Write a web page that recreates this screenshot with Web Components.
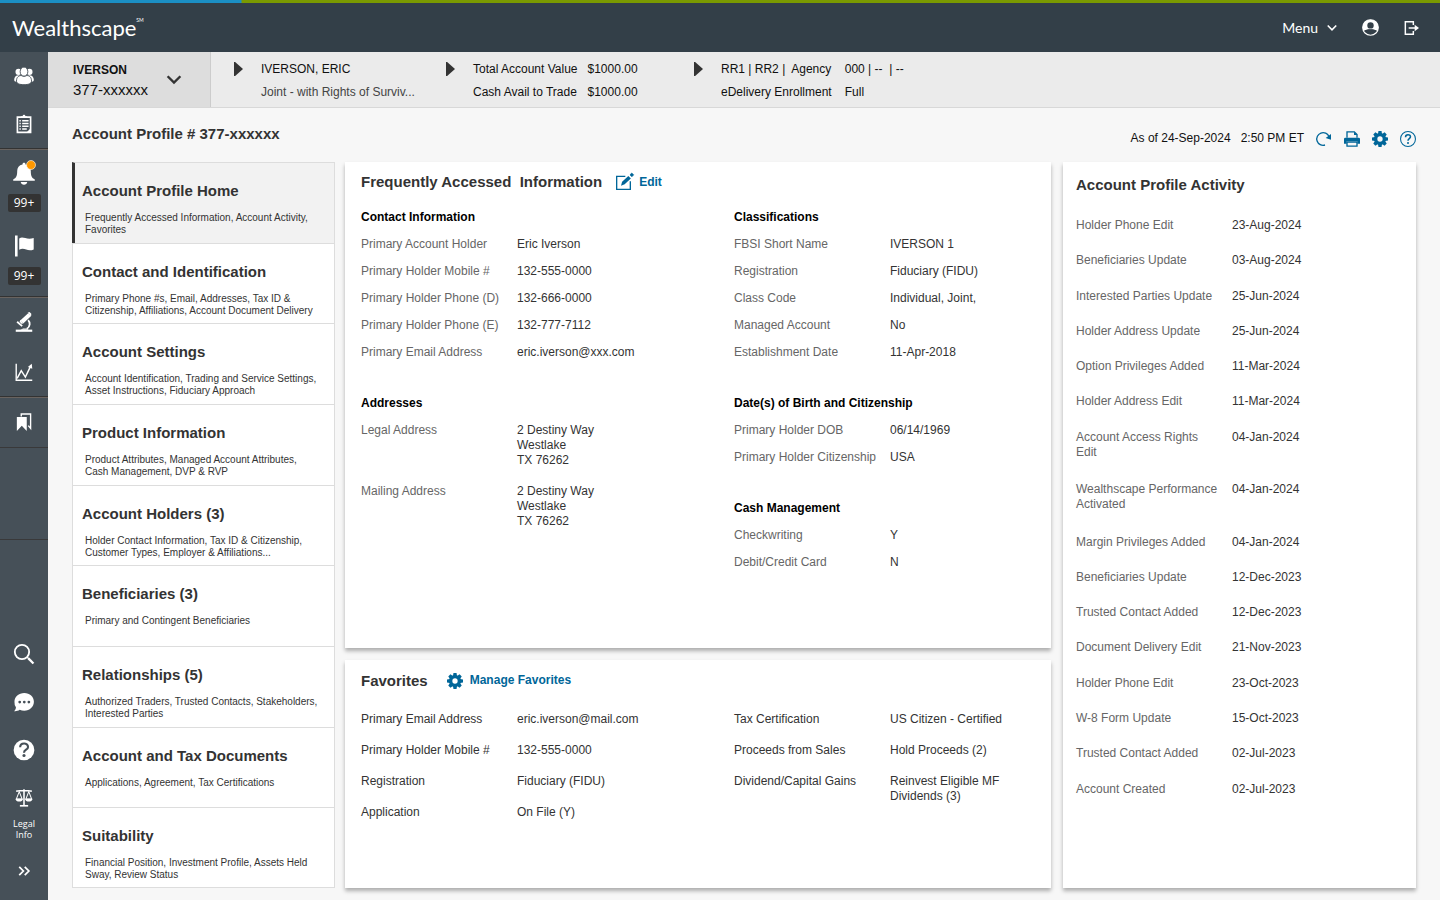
<!DOCTYPE html>
<html lang="en">
<head>
<meta charset="utf-8">
<meta name="viewport" content="width=device-width, initial-scale=1">
<title>Account Profile</title>
<style>
body {
  margin: 0;
  background: #f7f7f7;
  color: #333;
  font: 12px/15px "Liberation Sans", Arial, sans-serif;
}
</style>
</head>
<body>
<profile-app></profile-app>

<script>
const icons = {
  people: `<g fill="currentColor"><circle cx="6" cy="7.5" r="3.3"/><circle cx="18" cy="7.5" r="3.3"/><path d="M1.3 16.2c0-3 1.7-5 5-5l3 1v6H3.5c-1.5 0-2.2-.5-2.2-2zM22.7 16.2c0-3-1.7-5-5-5l-3 1v6h5.800c1.5 0 2.200-.5 2.200-2z"/></g><g fill="currentColor" stroke="#465058"><ellipse cx="12" cy="7.3" rx="4.2" ry="5"/><path d="M3.8 17.5c0-4.500 2.700-6 5.200-6 1.600 1.200 4.400 1.200 6 0 2.500 0 5.200 1.500 5.200 6 0 2.700-3.200 4-8.200 4s-8.200-1.300-8.200-4z"/></g>`,
  clipboard: `<path d="M4.800 4.500h14.400v16.700H4.800z" fill="none" stroke="currentColor" stroke-width="1.800"/><path d="M8.500 5V3.500h2a1.500 1.500 0 0 1 3 0h2V5z" fill="currentColor"/><path d="M7 8.500h1.500M10 8.500h7M7 11.500h1.500M10 11.500h7M7 14.500h1.500M10 14.500h7M7 17.500h1.500M10 17.500h5" stroke="currentColor" stroke-width="1.500"/><path d="M19 17v4h-4z" fill="currentColor"/>`,
  bell: `<path d="M12 1.800c1 0 1.500.7 1.500 1.600 3.500.7 5.300 3.300 5.300 6.600 0 5 1 7 4 8.400v1.300H1.200v-1.300c3-1.400 4-3.400 4-8.400 0-3.300 1.800-5.900 5.300-6.600 0-.9.5-1.600 1.500-1.600zM8.700 21h6.600c-.4 1.800-1.600 2.700-3.300 2.700S9.100 22.800 8.700 21z" fill="currentColor"/><circle cx="19" cy="4" r="4.500" fill="#ff9800" stroke="#fff" stroke-width=".6"/>`,
  flag: `<path d="M3 1.500h2.600v21H3zM7.200 4.500c4-3 7 2 14.500-.5v11.500c-6.500 2.800-9-2.700-14.500.3z" fill="currentColor"/>`,
  microscope: `<path d="M3 21.500h18" stroke="currentColor" stroke-width="2.400"/><path d="M8 20.500h9c-1-.8-1.500-1-2.600-1.300H11z" fill="currentColor"/><path d="M15 19.500c4-2.500 4-7 1.500-9.500" fill="none" stroke="currentColor" stroke-width="2"/><path d="M16.500 2.500l3.500 2.800-8.500 8L8.200 10z" fill="currentColor"/><path d="M16 2l2-1 2 2-.3 2.500zM8 9.500l3.500 4-2.300.3-2-2z" fill="currentColor"/><path d="M4.500 11.800l5.500 4.700" stroke="currentColor" stroke-width="2"/>`,
  chart: `<path d="M3.500 3v18H21" fill="none" stroke="currentColor" stroke-width="1.500"/><path d="M4.500 19L9 10.500l4.500 7L19.500 5" fill="none" stroke="currentColor" stroke-width="1.600"/><path d="M16.200 6.500L20.500 3l.5 5.500z" fill="currentColor"/>`,
  bookmarks: `<path d="M4.200 6.500H15v15.300l-5.400-5.600-5.400 5.600z" fill="currentColor"/><path d="M9 6V3.300h10.200V19l-2.500-3" fill="none" stroke="currentColor" stroke-width="1.500"/>`,
  search: `<circle cx="9.800" cy="9.800" r="7.800" fill="none" stroke="currentColor" stroke-width="2"/><path d="M15.500 15.500l1.700 1.700" stroke="currentColor" stroke-width="1.500"/><path d="M16.800 16.800l5.500 5.500" stroke="currentColor" stroke-width="2.500"/>`,
  chat: `<path d="M12.300 2.300c6 0 10.500 4.300 10.500 9.500s-4.500 9.800-10.500 9.800c-1.800 0-3.500-.4-5-1.100-1.800 1.300-3.800 1.700-6.100 1.500 1.400-1.200 2-2.500 2-4.200a9.300 9.300 0 0 1-1.600-6c0-5.200 4.700-9.500 10.700-9.500z" fill="currentColor"/><g fill="#465058"><circle cx="7.300" cy="12" r="1.500"/><circle cx="12.300" cy="12" r="1.500"/><circle cx="17.300" cy="12" r="1.500"/></g>`,
  helpSolid: `<circle cx="12" cy="12" r="11.300" fill="currentColor"/><path d="M7.800 9c0-5.500 8.600-5.400 8.600-.4 0 3.200-4.400 3-4.400 6.400" fill="none" stroke="#465058" stroke-width="2.300"/><circle cx="12" cy="18" r="1.700" fill="#465058"/>`,
  scales: `<path d="M3.500 4.500c3 0 5-.7 8.500-.7s5.500.7 8.500.7M12 2.500v17" fill="none" stroke="currentColor" stroke-width="1.700"/><path d="M7.500 20.500h9" stroke="currentColor" stroke-width="1.800"/><path d="M6.800 5L3.700 13h6.200zM17.200 5l-3.100 8h6.200z" fill="none" stroke="currentColor" stroke-width="1.100"/><path d="M2.800 12.700h8c0 4.300-8 4.300-8 0zM13.200 12.700h8c0 4.300-8 4.300-8 0z" fill="currentColor"/>`,
  expand: `<path d="M6.800 7.500l4.500 4.500-4.500 4.500M12.800 7.500l4.500 4.500-4.500 4.500" fill="none" stroke="currentColor" stroke-width="1.900"/>`,
  chevron: `<path d="M3.500 7l8.500 8.500L20.500 7" fill="none" stroke="currentColor" stroke-width="3.200"/>`,
  play: `<path d="M0 0h3l21 12L3 24H0z" fill="currentColor"/>`,
  user: `<circle cx="12" cy="12" r="11" fill="#333f48" stroke="currentColor" stroke-width="1.600"/><path d="M12 1a11 11 0 0 1 9.800 16c-2.300-1.800-5.800-2.500-9.800-2.500S4.500 15.200 2.200 17A11 11 0 0 1 12 1z" fill="currentColor"/><circle cx="12" cy="9" r="4.500" fill="#333f48"/><path d="M3.500 17.500c2-1.500 5-2.200 8.500-2.200s6.500.7 8.500 2.200" fill="none" stroke="#333f48"/>`,
  logout: `<path d="M15.500 7.500V2.500H3.500v19h12v-5" fill="none" stroke="currentColor" stroke-width="2.200"/><path d="M8.500 12h12" stroke="currentColor" stroke-width="2.200"/><path d="M17.500 7l6.500 5-6.500 5z" fill="currentColor"/>`,
  refresh: `<path d="M13.500 21a9.500 9.500 0 1 1 6-12.500" fill="none" stroke="currentColor" stroke-width="2"/><path d="M22.500 4.500v8.500l-8-2.500z" fill="currentColor"/>`,
  print: `<path d="M4.500 10V1.200h11l4 4V10" fill="none" stroke="currentColor" stroke-width="2"/><path d="M15 1v5h5z" fill="currentColor"/><path d="M2 10h20a2 2 0 0 1 2 2v7h-4v-4H4v4H0v-7a2 2 0 0 1 2-2z" fill="currentColor"/><path d="M4.500 16.500h15v6.300h-15z" fill="none" stroke="currentColor" stroke-width="2"/>`,
  gear: `<circle cx="12" cy="12" r="6.500" fill="none" stroke="currentColor" stroke-width="5"/><g fill="currentColor">${[0, 45, 90, 135, 180, 225, 270, 315].map(a => `<path d="M9.700 0h4.600l.7 4.500H9z" transform="rotate(${a} 12 12)"/>`).join("")}</g>`,
  help: `<circle cx="12" cy="12" r="11.200" fill="none" stroke="currentColor" stroke-width="1.600"/><path d="M8.300 9.200c0-4.800 7.400-4.700 7.400-.5 0 2.900-3.700 2.700-3.700 6" fill="none" stroke="currentColor" stroke-width="2.300"/><circle cx="12" cy="18" r="1.500" fill="currentColor"/>`,
  edit: `<path d="M14 3.500H1v19.500h20.500V11" fill="none" stroke="currentColor" stroke-width="2"/><path d="M7.500 17.500l1.700-6L18.500 3l3.800 3.800-9.300 8.700z" fill="currentColor"/><path d="M21 1.500L23.500-1.500 26.500 1.200 24 4z" fill="currentColor" stroke="currentColor"/>`
};

const navItems = [
  ["Account Profile Home", "Frequently Accessed Information, Account Activity, Favorites"],
  ["Contact and Identification", "Primary Phone #s, Email, Addresses, Tax ID &amp; Citizenship, Affiliations, Account Document Delivery"],
  ["Account Settings", "Account Identification, Trading and Service Settings, Asset Instructions, Fiduciary Approach"],
  ["Product Information", "Product Attributes, Managed Account Attributes, Cash Management, DVP &amp; RVP"],
  ["Account Holders (3)", "Holder Contact Information, Tax ID &amp; Citizenship, Customer Types, Employer &amp; Affiliations..."],
  ["Beneficiaries (3)", "Primary and Contingent Beneficiaries"],
  ["Relationships (5)", "Authorized Traders, Trusted Contacts, Stakeholders, Interested Parties"],
  ["Account and Tax Documents", "Applications, Agreement, Tax Certifications"],
  ["Suitability", "Financial Position, Investment Profile, Assets Held Sway, Review Status"]
];

const address = "2 Destiny Way<br>Westlake<br>TX 76262";

const facts = {
  contact: [
    ["Primary Account Holder", "Eric Iverson"],
    ["Primary Holder Mobile #", "132-555-0000"],
    ["Primary Holder Phone (D)", "132-666-0000"],
    ["Primary Holder Phone (E)", "132-777-7112"],
    ["Primary Email Address", "eric.iverson@xxx.com"]
  ],
  addresses: [
    ["Legal Address", address],
    ["Mailing Address", address]
  ],
  classifications: [
    ["FBSI Short Name", "IVERSON 1"],
    ["Registration", "Fiduciary (FIDU)"],
    ["Class Code", "Individual, Joint,"],
    ["Managed Account", "No"],
    ["Establishment Date", "11-Apr-2018"]
  ],
  birth: [
    ["Primary Holder DOB", "06/14/1969"],
    ["Primary Holder Citizenship", "USA"]
  ],
  cash: [
    ["Checkwriting", "Y"],
    ["Debit/Credit Card", "N"]
  ],
  favoritesLeft: [
    ["Primary Email Address", "eric.iverson@mail.com"],
    ["Primary Holder Mobile #", "132-555-0000"],
    ["Registration", "Fiduciary (FIDU)"],
    ["Application", "On File (Y)"]
  ],
  favoritesRight: [
    ["Tax Certification", "US Citizen - Certified"],
    ["Proceeds from Sales", "Hold Proceeds (2)"],
    ["Dividend/Capital Gains", "Reinvest Eligible MF Dividends (3)"]
  ],
  activity: [
    ["Holder Phone Edit", "23-Aug-2024"],
    ["Beneficiaries Update", "03-Aug-2024"],
    ["Interested Parties Update", "25-Jun-2024"],
    ["Holder Address Update", "25-Jun-2024"],
    ["Option Privileges Added", "11-Mar-2024"],
    ["Holder Address Edit", "11-Mar-2024"],
    ["Account Access Rights Edit", "04-Jan-2024", "tall"],
    ["Wealthscape Performance Activated", "04-Jan-2024", "tall"],
    ["Margin Privileges Added", "04-Jan-2024"],
    ["Beneficiaries Update", "12-Dec-2023"],
    ["Trusted Contact Added", "12-Dec-2023"],
    ["Document Delivery Edit", "21-Nov-2023"],
    ["Holder Phone Edit", "23-Oct-2023"],
    ["W-8 Form Update", "15-Oct-2023"],
    ["Trusted Contact Added", "02-Jul-2023"],
    ["Account Created", "02-Jul-2023"]
  ]
};

const base = `
*, *::before { box-sizing: border-box; }
button {
  display: flex;
  border: 0;
  padding: 0;
  background: none;
  color: inherit;
  font: inherit;
  cursor: pointer;
}
a { color: inherit; text-decoration: none; }
h1, h2, dl, dd, dt, p { margin: 0; }
`;

class BaseElement extends HTMLElement {
  constructor() {
    super();
    this.attachShadow({ mode: "open" });
  }
  connectedCallback() {
    this.shadowRoot.innerHTML = `<style>${base}${this.styles()}</style>${this.render()}`;
  }
}

class UiIcon extends BaseElement {
  styles() {
    const size = this.getAttribute("size") || 24;
    return `
:host { display: inline-flex; flex: none; }
svg { display: block; width: ${size}px; height: ${size}px; overflow: visible; }
:host([name="play"]) svg { width: 9px; height: 14px; }
`;
  }
  render() {
    const fit = this.getAttribute("name") === "play" ? "none" : "xMidYMid";
    return `<svg viewBox="0 0 24 24" preserveAspectRatio="${fit}" aria-hidden="true">${icons[this.getAttribute("name")]}</svg>`;
  }
}
customElements.define("ui-icon", UiIcon);

class AppHeader extends BaseElement {
  styles() {
    return `
:host { display: block; background: #333f48; color: #fff; }
.stripe {
  height: 3px;
  background: linear-gradient(90deg, #1b8fc4 241px, #7a9a01 242px);
}
.bar {
  display: flex;
  align-items: center;
  justify-content: space-between;
  height: 49px;
  padding: 0 21px 0 12px;
  font-family: Lato, sans-serif;
}
.logo { display: flex; font-size: 22px; line-height: 28px; }
.logo sup { font-size: 5px; line-height: 12px; }
.tools, .menu { display: flex; align-items: center; }
.tools { gap: 24px; }
.menu { gap: 8px; font-size: 14px; line-height: 20px; }
`;
  }
  render() {
    return `
<div class="stripe"></div>
<header class="bar">
  <a class="logo" href="#home">Wealthscape<sup>SM</sup></a>
  <div class="tools">
    <button class="menu">Menu <ui-icon name="chevron" size="12"></ui-icon></button>
    <button aria-label="User profile"><ui-icon name="user" size="17"></ui-icon></button>
    <button aria-label="Log out"><ui-icon name="logout" size="16"></ui-icon></button>
  </div>
</header>
`;
  }
}
customElements.define("app-header", AppHeader);

class RailButton extends BaseElement {
  styles() {
    return `
:host { display: block; }
button {
  flex-direction: column;
  align-items: center;
  justify-content: center;
  width: 100%;
  height: 48px;
}
.badged, .captioned {
  justify-content: flex-start;
  gap: 9px;
  height: 73px;
  padding-top: 11px;
}
.captioned { padding-top: 13px; }
.badge {
  width: 33px;
  border-radius: 2px;
  background: #333;
  font: 12px/18px "Open Sans", sans-serif;
}
.caption { width: 30px; font: 9px/11px "Open Sans", sans-serif; }
`;
  }
  render() {
    const badge = this.getAttribute("badge");
    const caption = this.getAttribute("caption");
    return `
<button class="${badge ? "badged" : caption ? "captioned" : ""}" aria-label="${this.getAttribute("label")}">
  <ui-icon name="${this.getAttribute("icon")}" size="${this.getAttribute("size") || 22}"></ui-icon>
  ${badge ? `<span class="badge">${badge}</span>` : ""}
  ${caption ? `<span class="caption">${caption}</span>` : ""}
</button>
`;
  }
}
customElements.define("rail-button", RailButton);

class SideRail extends BaseElement {
  styles() {
    return `
:host { display: flex; background: #465058; color: #fff; }
nav { display: flex; flex-direction: column; width: 48px; }
.group {
  padding-bottom: 1px;
  border-bottom: 1px solid #69635f;
  box-shadow: inset 0 -1px #333;
}
.spaced { display: grid; gap: 2px; }
.plain { border-color: #39393a; box-shadow: none; }
.empty { height: 92px; }
.bottom {
  display: flex;
  flex: 1;
  flex-direction: column;
  justify-content: flex-end;
  padding-bottom: 5px;
}
`;
  }
  render() {
    return `
<nav aria-label="Main">
  <div class="group">
    <rail-button icon="people" label="Clients"></rail-button>
    <rail-button icon="clipboard" label="Tasks"></rail-button>
  </div>
  <div class="group">
    <rail-button icon="bell" label="Alerts" badge="99+" size="24"></rail-button>
    <rail-button icon="flag" label="Flags" badge="99+" size="24"></rail-button>
  </div>
  <div class="group spaced">
    <rail-button icon="microscope" label="Research"></rail-button>
    <rail-button icon="chart" label="Markets"></rail-button>
  </div>
  <div class="group plain"><rail-button icon="bookmarks" label="Bookmarks"></rail-button></div>
  <div class="group plain empty"></div>
  <div class="bottom">
    <rail-button icon="search" label="Search"></rail-button>
    <rail-button icon="chat" label="Chat"></rail-button>
    <rail-button icon="helpSolid" label="Help"></rail-button>
    <rail-button icon="scales" label="Legal Info" caption="Legal Info"></rail-button>
    <rail-button icon="expand" label="Expand"></rail-button>
  </div>
</nav>
`;
  }
}
customElements.define("side-rail", SideRail);

class ContextBar extends BaseElement {
  styles() {
    return `
:host {
  display: flex;
  height: 56px;
  border-bottom: 1px solid #d8d8d8;
  background: #ebebeb;
  color: #111;
}
.account {
  align-items: center;
  justify-content: space-between;
  width: 163px;
  padding: 0 27px 0 25px;
  border-right: 1px solid #ccc;
  background: #ddd;
  line-height: 19px;
  text-align: left;
}
.account b, .number { display: block; }
.number { font-size: 15px; }
.account ui-icon { color: #333; }
.details {
  display: grid;
  grid-template-columns: 212px 248px auto;
  padding: 6px 0 0 23px;
}
section { display: flex; align-items: flex-start; gap: 18px; line-height: 23px; }
section button { align-items: center; height: 22px; color: #333; }
p { white-space: nowrap; }
p + p { color: #444; }
dl { display: grid; grid-template-columns: auto auto; align-content: start; column-gap: 10px; }
dl.wide { column-gap: 13px; }
dt, dd { white-space: pre; }
`;
  }
  render() {
    return `
<button class="account">
  <span><b>IVERSON</b><span class="number">377-xxxxxx</span></span>
  <ui-icon name="chevron" size="18"></ui-icon>
</button>
<div class="details">
  <section>
    <button aria-label="Expand holder"><ui-icon name="play"></ui-icon></button>
    <div><p>IVERSON, ERIC</p><p>Joint - with Rights of Surviv...</p></div>
  </section>
  <section>
    <button aria-label="Expand balances"><ui-icon name="play"></ui-icon></button>
    <dl><dt>Total Account Value</dt><dd>$1000.00</dd><dt>Cash Avail to Trade</dt><dd>$1000.00</dd></dl>
  </section>
  <section>
    <button aria-label="Expand agency"><ui-icon name="play"></ui-icon></button>
    <dl class="wide"><dt>RR1 | RR2 |  Agency</dt><dd>000 | --  | --</dd><dt>eDelivery Enrollment</dt><dd>Full</dd></dl>
  </section>
</div>
`;
  }
}
customElements.define("context-bar", ContextBar);

class PageTitle extends BaseElement {
  styles() {
    return `
:host {
  display: flex;
  box-sizing: border-box;
  align-items: center;
  justify-content: space-between;
  height: 54px;
  padding-bottom: 2px;
}
h1 { font-size: 15px; line-height: 20px; }
.tools { display: flex; align-items: center; gap: 12px; padding-top: 9px; color: #111; }
.time { display: flex; gap: 10px; }
button { color: #006699; }
`;
  }
  render() {
    return `
<h1>Account Profile # 377-xxxxxx</h1>
<div class="tools">
  <div class="time"><span>As of 24-Sep-2024</span><span>2:50 PM ET</span></div>
  <button aria-label="Refresh"><ui-icon name="refresh" size="16"></ui-icon></button>
  <button aria-label="Print"><ui-icon name="print" size="16"></ui-icon></button>
  <button aria-label="Settings"><ui-icon name="gear" size="16"></ui-icon></button>
  <button aria-label="Help"><ui-icon name="help" size="16"></ui-icon></button>
</div>
`;
  }
}
customElements.define("page-title", PageTitle);

class ProfileNav extends BaseElement {
  styles() {
    return `
:host { display: grid; }
nav { display: grid; grid-auto-rows: 1fr; }
a {
  padding: 18px 14px 5px 9px;
  border: 1px solid #ddd;
  border-bottom: 0;
  background: #fff;
}
a:last-child { border-bottom: 1px solid #ddd; }
a.active {
  padding-left: 7px;
  border-left: 3px solid #333;
  background: #f2f2f2;
}
h2 { font-size: 15px; line-height: 20px; }
p { padding: 11px 0 0 3px; font-size: 10px; line-height: 12px; }
`;
  }
  render() {
    const links = navItems.map(([title, text], i) => `
  <a href="#section-${i}" class="${i === 0 ? "active" : ""}"><h2>${title}</h2><p>${text}</p></a>`);
    return `<nav aria-label="Account profile">${links.join("")}</nav>`;
  }
}
customElements.define("profile-nav", ProfileNav);

class InfoCard extends BaseElement {
  styles() {
    return `
:host {
  display: block;
  padding: 10px 16px;
  background: #fff;
  box-shadow: 0 3px 4px rgba(0, 0, 0, .3);
}
header { display: flex; align-items: center; height: 20px; margin-bottom: var(--head-gap, 12px); }
h2 { font-size: 15px; line-height: 20px; white-space: pre; }
`;
  }
  render() {
    return `
<header><h2>${this.getAttribute("heading")}</h2><slot name="action"></slot></header>
<slot></slot>
`;
  }
}
customElements.define("info-card", InfoCard);

class LinkButton extends BaseElement {
  styles() {
    return `
:host { display: block; }
button {
  align-items: center;
  gap: 7px;
  color: #006699;
  font-weight: bold;
}
`;
  }
  render() {
    return `
<button><ui-icon name="${this.getAttribute("icon")}" size="16"></ui-icon><slot></slot></button>
`;
  }
}
customElements.define("link-button", LinkButton);

class FactTable extends BaseElement {
  styles() {
    return `
:host { display: block; }
table { width: 100%; border-collapse: collapse; table-layout: fixed; }
caption { padding: 6px 0; color: #000; font-weight: bold; text-align: left; }
th, td { padding: var(--row-pad, 6px) 0; vertical-align: top; text-align: left; font-weight: normal; }
th { width: 156px; padding-right: 12px; color: var(--label-color, #666); }
.tall > * { padding-bottom: 12px; }
:host([name="addresses"]) td { padding-bottom: 10px; }
:host([name="activity"]) table { height: 599px; }
`;
  }
  render() {
    const heading = this.getAttribute("heading");
    const rows = facts[this.getAttribute("name")].map(([label, value, size]) =>
      `<tr class="${size || ""}"><th scope="row">${label}</th><td>${value}</td></tr>`);
    return `
<table>
  ${heading ? `<caption>${heading}</caption>` : ""}
  ${rows.join("\n  ")}
</table>
`;
  }
}
customElements.define("fact-table", FactTable);

class ProfileApp extends BaseElement {
  styles() {
    return `
:host { display: flex; flex-direction: column; min-height: 100vh; }
.body { display: flex; flex: 1; }
.page { display: flex; flex: 1; flex-direction: column; min-width: 0; }
main { display: flex; flex: 1; flex-direction: column; padding: 0 24px 12px; }
.columns { display: grid; flex: 1; grid-template-columns: 263px 1fr; gap: 10px; }
.cards {
  display: grid;
  grid-template-columns: 2fr 1fr;
  grid-template-rows: 17fr 8fr;
  gap: 12px;
}
.activity {
  grid-column: 2;
  grid-row: 1 / 3;
  padding: 13px;
  --head-gap: 13px;
  --row-pad: 10px;
}
.favorites { padding-top: 11px; --head-gap: 13px; --row-pad: 8px; --label-color: #333; }
.split { display: grid; grid-template-columns: 1fr 1fr; gap: 72px; align-items: start; }
.stack { display: grid; gap: 24px; }
link-button { margin-left: 14px; }
.favorites link-button { margin-left: 19px; }
`;
  }
  render() {
    return `
<app-header></app-header>
<div class="body">
  <side-rail></side-rail>
  <div class="page">
    <context-bar></context-bar>
    <main>
      <page-title></page-title>
      <div class="columns">
        <profile-nav></profile-nav>
        <div class="cards">
          <info-card heading="Frequently Accessed  Information">
            <link-button slot="action" icon="edit">Edit</link-button>
            <div class="split">
              <div class="stack">
                <fact-table name="contact" heading="Contact Information"></fact-table>
                <fact-table name="addresses" heading="Addresses"></fact-table>
              </div>
              <div class="stack">
                <fact-table name="classifications" heading="Classifications"></fact-table>
                <fact-table name="birth" heading="Date(s) of Birth and Citizenship"></fact-table>
                <fact-table name="cash" heading="Cash Management"></fact-table>
              </div>
            </div>
          </info-card>
          <info-card class="favorites" heading="Favorites">
            <link-button slot="action" icon="gear">Manage Favorites</link-button>
            <div class="split">
              <fact-table name="favoritesLeft"></fact-table>
              <fact-table name="favoritesRight"></fact-table>
            </div>
          </info-card>
          <info-card class="activity" heading="Account Profile Activity">
            <fact-table name="activity"></fact-table>
          </info-card>
        </div>
      </div>
    </main>
  </div>
</div>
`;
  }
}
customElements.define("profile-app", ProfileApp);
</script>
</body>
</html>
